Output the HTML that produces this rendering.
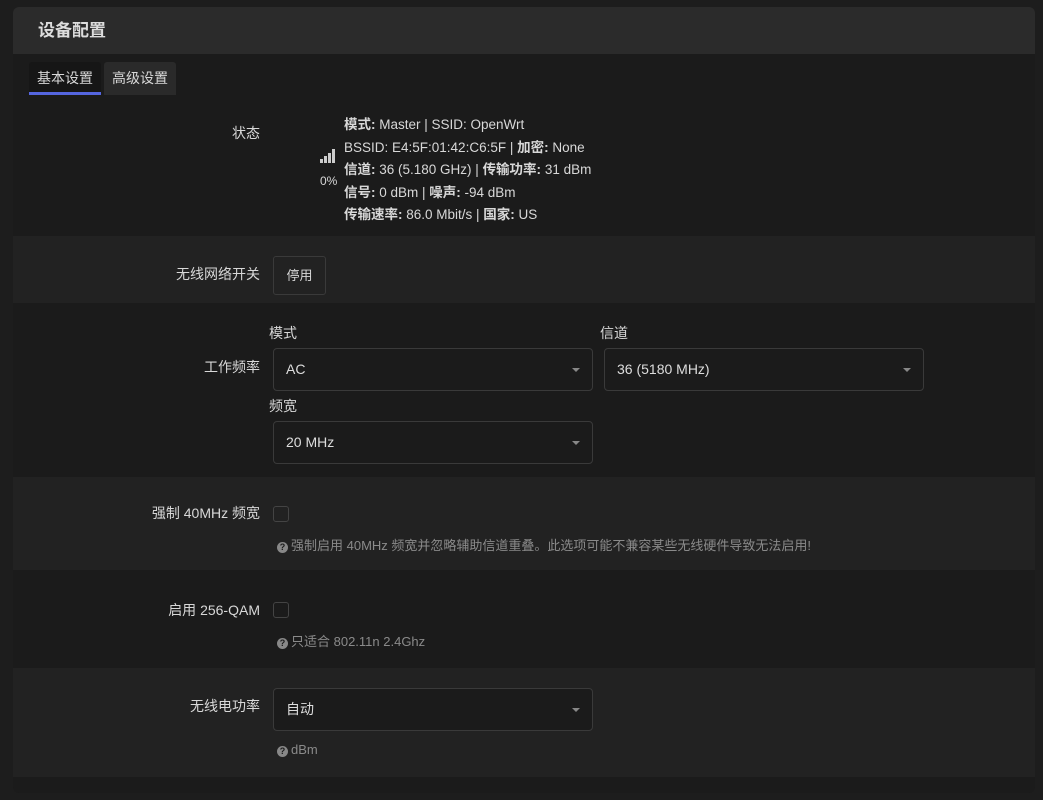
<!DOCTYPE html><html><head><meta charset="utf-8"><style>
*{margin:0;padding:0;box-sizing:border-box}
body{width:1043px;height:800px;background:#1d1d1d;font-family:"Liberation Sans","Noto Sans CJK SC",sans-serif;color:#d8d8d8;position:relative;overflow:hidden;font-size:14px}
.a{position:absolute}
.card{left:13px;top:7px;width:1022px;height:786px;background:#1b1b1b;border-radius:6px;overflow:hidden}
.hd{left:0;top:0;width:1022px;height:47px;background:#2b2b2b}
.row{left:0;width:1022px}
.lbl{font-size:14px;color:#d8d8d8;text-align:right;width:247px;left:0}
.sel{border:1px solid #3a3a3a;border-radius:4px;background:#1b1b1b;height:43px;line-height:41px;padding-left:12px;font-size:14px;color:#ddd}
.sel:after{content:"";position:absolute;right:12px;top:19px;border-left:4px solid transparent;border-right:4px solid transparent;border-top:4px solid #888}
.cb{width:16px;height:16px;border:1px solid #444;border-radius:3px}
.hint{font-size:13px;color:#8a8a8a}
.q{display:inline-block;width:11px;height:11px;border-radius:50%;background:#888;color:#1b1b1b;font-size:9px;line-height:11px;text-align:center;font-weight:bold;margin-right:3px;vertical-align:0}
.st{font-size:13.5px;line-height:22.5px;color:#d8d8d8}
b{font-weight:bold}
</style></head><body>
<div class="a card">
 <div class="a hd"><div class="a" style="left:25px;top:9px;font-size:17px;font-weight:bold;color:#ddd">设备配置</div></div>
 <div class="a" style="left:16px;top:55px;width:72px;height:33px;background:#161616;border-radius:3px 3px 0 0"></div>
 <div class="a" style="left:16px;top:85px;width:72px;height:3px;background:#5566e0"></div>
 <div class="a" style="left:24px;top:61px;font-size:14px">基本设置</div>
 <div class="a" style="left:91px;top:55px;width:72px;height:33px;background:#2a2a2a;border-radius:3px 3px 0 0"></div>
 <div class="a" style="left:99px;top:61px;font-size:14px">高级设置</div>

 <div class="a row" style="top:103px;height:126px;background:#1b1b1b"></div>
 <div class="a lbl" style="top:116px">状态</div>
 <svg class="a" style="left:307px;top:141px" width="16" height="15"><rect x="0" y="11" width="3" height="4" fill="#ccc"/><rect x="4" y="8" width="3" height="7" fill="#ccc"/><rect x="8" y="5" width="3" height="10" fill="#ccc"/><rect x="12" y="1" width="3" height="14" fill="#ccc"/></svg>
 <div class="a" style="left:307px;top:167px;font-size:12px">0%</div>
 <div class="a st" style="left:331px;top:107px">
 <b>模式:</b> Master | SSID: OpenWrt<br>BSSID: E4:5F:01:42:C6:5F | <b>加密:</b> None<br><b>信道:</b> 36 (5.180 GHz) | <b>传输功率:</b> 31 dBm<br><b>信号:</b> 0 dBm | <b>噪声:</b> -94 dBm<br><b>传输速率:</b> 86.0 Mbit/s | <b>国家:</b> US</div>

 <div class="a row" style="top:229px;height:67px;background:#222"></div>
 <div class="a lbl" style="top:257px">无线网络开关</div>
 <div class="a" style="left:260px;top:249px;width:53px;height:39px;border:1px solid #3a3a3a;border-radius:3px;font-size:13px;text-align:center;line-height:37px">停用</div>

 <div class="a row" style="top:296px;height:174px;background:#1b1b1b"></div>
 <div class="a lbl" style="top:350px">工作频率</div>
 <div class="a" style="left:256px;top:316px">模式</div>
 <div class="a" style="left:587px;top:316px">信道</div>
 <div class="a sel" style="left:260px;top:341px;width:320px">AC</div>
 <div class="a sel" style="left:591px;top:341px;width:320px">36 (5180 MHz)</div>
 <div class="a" style="left:256px;top:389px">频宽</div>
 <div class="a sel" style="left:260px;top:414px;width:320px">20 MHz</div>

 <div class="a row" style="top:470px;height:93px;background:#222"></div>
 <div class="a lbl" style="top:496px">强制 40MHz 频宽</div>
 <div class="a cb" style="left:260px;top:499px"></div>
 <div class="a hint" style="left:264px;top:528px"><span class="q">?</span>强制启用 40MHz 频宽并忽略辅助信道重叠。此选项可能不兼容某些无线硬件导致无法启用!</div>

 <div class="a row" style="top:563px;height:98px;background:#1b1b1b"></div>
 <div class="a lbl" style="top:593px">启用 256-QAM</div>
 <div class="a cb" style="left:260px;top:595px"></div>
 <div class="a hint" style="left:264px;top:624px"><span class="q">?</span>只适合 802.11n 2.4Ghz</div>

 <div class="a row" style="top:661px;height:109px;background:#222"></div>
 <div class="a lbl" style="top:689px">无线电功率</div>
 <div class="a sel" style="left:260px;top:681px;width:320px">自动</div>
 <div class="a hint" style="left:264px;top:735px"><span class="q">?</span>dBm</div>
</div>
</body></html>
